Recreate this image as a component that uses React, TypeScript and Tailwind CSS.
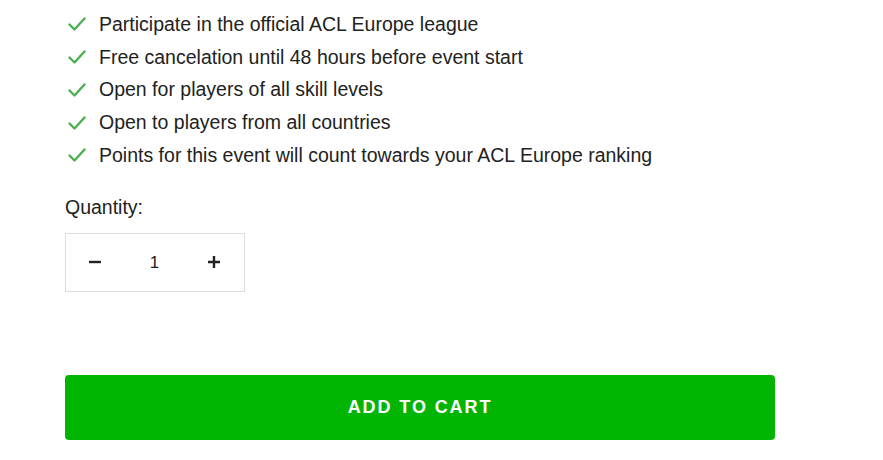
import React from "react";

const items = [
  "Participate in the official ACL Europe league",
  "Free cancelation until 48 hours before event start",
  "Open for players of all skill levels",
  "Open to players from all countries",
  "Points for this event will count towards your ACL Europe ranking",
];

function Check() {
  return (
    <svg width="18" height="14" viewBox="0 0 18 14" fill="none">
      <path d="M1.5 7.5 L6.5 12.5 L16.5 1.5" stroke="#4caf50" strokeWidth="2.4" strokeLinecap="round" strokeLinejoin="round" />
    </svg>
  );
}

export default function App() {
  return (
    <div className="w-[883px] h-[460px] bg-white overflow-hidden text-[#222]" style={{ fontFamily: '"Liberation Sans", Arial, sans-serif' }}>
      <div className="pl-[65px] pt-[8px] w-[775px]">
        <ul className="flex flex-col">
          {items.map((t) => (
            <li key={t} className="flex items-center h-[32.75px] text-[19.5px]">
              <span className="w-[34px] flex items-center pl-[3px]"><Check /></span>
              <span>{t}</span>
            </li>
          ))}
        </ul>
        <div className="mt-[23px] text-[19.5px] leading-[24px] h-[24px]">Quantity:</div>
        <div className="mt-[14px] w-[180px] h-[59px] border border-[#dddddd] flex items-center justify-between pl-[20px] pr-[21px] text-[18px]">
          <span className="w-[18px] flex justify-center">
            <svg width="14" height="14" viewBox="0 0 14 14"><path d="M1 7 H13" stroke="#222" strokeWidth="2.4" /></svg>
          </span>
          <span className="text-[17px]">1</span>
          <span className="w-[18px] flex justify-center">
            <svg width="14" height="14" viewBox="0 0 14 14"><path d="M1 7 H13 M7 1 V13" stroke="#222" strokeWidth="2.4" /></svg>
          </span>
        </div>
        <button className="mt-[83px] w-[710px] h-[65px] rounded-[4px] bg-[#02b503] text-white font-bold text-[18px] tracking-[1.9px] flex items-center justify-center">
          ADD TO CART
        </button>
      </div>
    </div>
  );
}
